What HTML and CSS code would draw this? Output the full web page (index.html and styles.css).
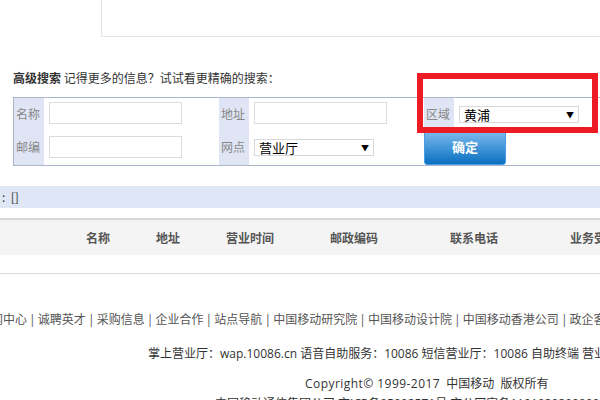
FILE: index.html
```html
<!DOCTYPE html>
<html lang="zh-CN">
<head>
    <meta charset="UTF-8" />
    <meta name="viewport" content="width=device-width, initial-scale=1" />
    <title>营业厅查询</title>
    <link rel="stylesheet" href="styles.css">
</head>
<body>

    <div class="top-box"></div>

    <h4 class="adv-title"><strong>高级搜索</strong> 记得更多的信息？试试看更精确的搜索：</h4>

    <div class="search-box">
        <div class="lab">名称</div>
        <div class="cell"><input type="text" class="txt"></div>
        <div class="lab">地址</div>
        <div class="cell"><input type="text" class="txt"></div>
        <div class="lab">区域</div>
        <div class="cell cell-top"><div class="sel sel-area"><span>黄浦</span><i>▼</i></div></div>

        <div class="lab">邮编</div>
        <div class="cell"><input type="text" class="txt"></div>
        <div class="lab">网点</div>
        <div class="cell cell-top"><div class="sel sel-type"><span>营业厅</span><i>▼</i></div></div>
        <div class="btn-cell"><button class="btn-ok">确定</button></div>
    </div>

    <div class="mark"></div>

    <div class="result-bar">:&nbsp;&nbsp;[]</div>

    <table class="result">
        <thead>
            <tr>
                <th class="c0"></th>
                <th class="c1">名称</th>
                <th class="c2">地址</th>
                <th class="c3">营业时间</th>
                <th class="c4">邮政编码</th>
                <th class="c5">联系电话</th>
                <th class="c6">业务受理</th>
            </tr>
        </thead>
        <tbody>
            <tr><td colspan="7"></td></tr>
        </tbody>
    </table>

    <div class="footer">
        <p class="links">新闻中心 | 诚聘英才 | 采购信息 | 企业合作 | 站点导航 | 中国移动研究院 | 中国移动设计院 | 中国移动香港公司 | 政企客户</p>
        <p class="svc">掌上营业厅：wap.10086.cn 语音自助服务：10086 短信营业厅：10086 自助终端 营业厅</p>
        <p class="copy"><span class="latin">Copyright© 1999-2017</span>&nbsp; 中国移动&nbsp; 版权所有</p>
        <p class="icp">中国移动通信集团公司 京ICP备05002571号 京公网安备11010202000001号</p>
    </div>

</body>
</html>
```

FILE: styles.css
```css
body { margin: 0; width: 600px; height: 400px; overflow: hidden; position: relative; font-family: "Noto Sans CJK SC", "Microsoft YaHei", sans-serif; font-size: 12px; color: #333; }

.top-box { height: 36px; margin-left: 101px; border-left: 1px solid #dfe4ee; border-bottom: 1px solid #dfe4ee; }

.adv-title { margin: 32px 0 10px 13px; height: 18px; line-height: 18px; font-size: 12px; font-weight: normal; color: #333; white-space: nowrap; }
.adv-title strong { font-weight: bold; color: #333; }

.search-box { margin-left: 13px; width: 700px; display: grid; grid-template-columns: 30px 175px 30px 175px 30px 1fr; grid-template-rows: 30px 37px; border-top: 1px solid #abb5cb; border-bottom: 1px solid #abb5cb; border-left: 1px solid #abb5cb; }
.lab { background: #dfe5f4; color: #888; padding-left: 2px; display: flex; align-items: center; font-size: 12px; }
.cell { padding-left: 5px; display: flex; align-items: center; }
.cell-top { align-items: flex-start; }
.txt { width: 133px; height: 22px; box-sizing: border-box; border: 1px solid #dcdcdc; margin: 0; padding: 0 4px; outline: none; }
.sel { width: 120px; box-sizing: border-box; border: 1px solid #d8d8d8; background: #fff; color: #000; font-size: 13px; display: flex; justify-content: space-between; align-items: center; padding: 0 4px; }
.sel i { font-style: normal; font-size: 8px; color: #000; }
.sel-area { height: 17px; line-height: 15px; margin-top: 8px; }
.sel-type { height: 17px; line-height: 15px; margin-top: 11px; }
.btn-cell { grid-column: 5 / 7; }
.btn-ok { width: 82px; height: 37px; margin: 0; padding: 0; border: 1px solid #4a9be6; border-radius: 0 0 3px 3px; background: linear-gradient(#86c0f2, #0a70c0); color: #fff; font-family: inherit; font-size: 13px; font-weight: bold; cursor: pointer; }

.mark { position: absolute; left: 417px; top: 73px; width: 181px; height: 60px; box-sizing: border-box; border: 6px solid #ed1c24; }

.result-bar { margin-top: 20px; height: 22px; line-height: 22px; background: #dfe6f5; padding-left: 2px; color: #333; }

.result { margin-top: 10px; width: 648px; border-collapse: collapse; table-layout: fixed; }
.result th { height: 35px; background: #f4f4f4; border-top: 2px solid #d8d8d8; color: #555; font-size: 12px; font-weight: bold; text-align: center; padding: 0; white-space: nowrap; }
.result td { height: 18px; border-bottom: 1px solid #dcdcdc; padding: 0; }
.c0 { width: 60px; }
.c1 { width: 76px; }
.c2 { width: 64px; }
.c3 { width: 100px; }
.c4 { width: 108px; }
.c5 { width: 132px; }
.c6 { width: 108px; }

.footer { margin-top: 36px; font-family: "Open Sans", "Noto Sans CJK SC", sans-serif; font-size: 12px; white-space: nowrap; }
.footer p { margin: 0; height: 20px; line-height: 20px; }
.links { color: #555; margin-left: -21px !important; word-spacing: -1px; }
.svc { margin-top: 14px !important; padding-left: 148px; color: #333; }
.copy { margin-top: 10px !important; padding-left: 305px; color: #333; }
.copy .latin { letter-spacing: 0.45px; }
.icp { padding-left: 215px; color: #333; }
```
